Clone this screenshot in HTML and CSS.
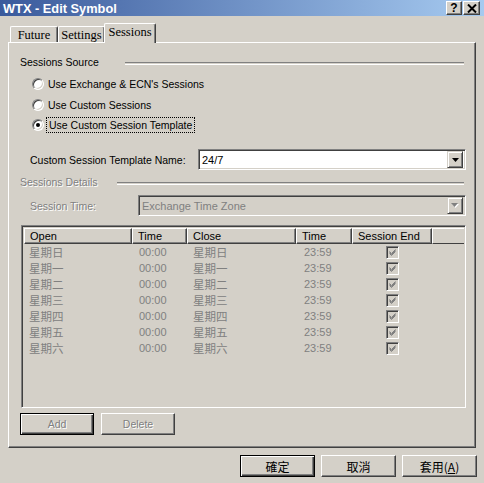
FILE: index.html
```html
<!DOCTYPE html>
<html>
<head>
<meta charset="utf-8">
<link rel="stylesheet" href="styles.css">
</head>
<body>
<div class="win">
  <div class="titlebar">
    <span class="title">WTX - Edit Symbol</span>
    <div class="tbtns">
      <span class="tbtn q">?</span>
      <span class="tbtn x"><svg width="10" height="9" viewBox="0 0 10 9"><path d="M1 0.5 L9 8.5 M9 0.5 L1 8.5" stroke="#000" stroke-width="2"/></svg></span>
    </div>
  </div>
  <div class="tabstrip">
    <span class="tab t1">Future</span>
    <span class="tab t2">Settings</span>
    <span class="tab sel">Sessions</span>
  </div>
  <div class="panel">
    <div class="grp">
      <span class="grp-label gl1">Sessions Source</span>
      <span class="grp-line"></span>
    </div>
    <div class="radios">
      <div class="radio-row r1"><span class="radio"></span><span>Use Exchange &amp; ECN's Sessions</span></div>
      <div class="radio-row r2"><span class="radio"></span><span>Use Custom Sessions</span></div>
      <div class="radio-row r3"><span class="radio on"><span class="dot"></span></span><span class="focus">Use Custom Session Template</span></div>
    </div>
    <div class="field f1">
      <span class="flabel">Custom Session Template Name:</span>
      <div class="combo c1">
        <span class="cval">24/7</span>
        <span class="cbtn"><svg width="7" height="4" viewBox="0 0 7 4"><path d="M0 0 H7 L3.5 4 Z" fill="#000"/></svg></span>
      </div>
    </div>
    <div class="grp g2">
      <span class="grp-label gl2 dis">Sessions Details</span>
      <span class="grp-line"></span>
    </div>
    <div class="field f2">
      <span class="flabel dis">Session Time:</span>
      <div class="combo c2 disabled">
        <span class="cval">Exchange Time Zone</span>
        <span class="cbtn"><svg width="8" height="5" viewBox="0 0 8 5"><path d="M1 1 H8 L4.5 5 Z" fill="#fff"/><path d="M0 0 H7 L3.5 4 Z" fill="#808080"/></svg></span>
      </div>
    </div>
    <div class="listview">
      <div class="lhead">
        <span class="hc w1">Open</span>
        <span class="hc w2">Time</span>
        <span class="hc w3">Close</span>
        <span class="hc w4">Time</span>
        <span class="hc w5">Session End</span>
        <span class="hc wrest"></span>
      </div>
      <div class="lrow"><span class="c w1">星期日</span><span class="c w2">00:00</span><span class="c w3">星期日</span><span class="c w4">23:59</span><span class="c w5 ck"><span class="chk"><svg width="9" height="9" viewBox="0 0 9 9"><path d="M1.5 3.5 L3.5 5.5 L7.5 1.5 M1.5 4.5 L3.5 6.5 L7.5 2.5 M1.5 5.5 L3.5 7.5 L7.5 3.5" stroke="#808080" stroke-width="1" fill="none"/></svg></span></span></div>
      <div class="lrow"><span class="c w1">星期一</span><span class="c w2">00:00</span><span class="c w3">星期一</span><span class="c w4">23:59</span><span class="c w5 ck"><span class="chk"><svg width="9" height="9" viewBox="0 0 9 9"><path d="M1.5 3.5 L3.5 5.5 L7.5 1.5 M1.5 4.5 L3.5 6.5 L7.5 2.5 M1.5 5.5 L3.5 7.5 L7.5 3.5" stroke="#808080" stroke-width="1" fill="none"/></svg></span></span></div>
      <div class="lrow"><span class="c w1">星期二</span><span class="c w2">00:00</span><span class="c w3">星期二</span><span class="c w4">23:59</span><span class="c w5 ck"><span class="chk"><svg width="9" height="9" viewBox="0 0 9 9"><path d="M1.5 3.5 L3.5 5.5 L7.5 1.5 M1.5 4.5 L3.5 6.5 L7.5 2.5 M1.5 5.5 L3.5 7.5 L7.5 3.5" stroke="#808080" stroke-width="1" fill="none"/></svg></span></span></div>
      <div class="lrow"><span class="c w1">星期三</span><span class="c w2">00:00</span><span class="c w3">星期三</span><span class="c w4">23:59</span><span class="c w5 ck"><span class="chk"><svg width="9" height="9" viewBox="0 0 9 9"><path d="M1.5 3.5 L3.5 5.5 L7.5 1.5 M1.5 4.5 L3.5 6.5 L7.5 2.5 M1.5 5.5 L3.5 7.5 L7.5 3.5" stroke="#808080" stroke-width="1" fill="none"/></svg></span></span></div>
      <div class="lrow"><span class="c w1">星期四</span><span class="c w2">00:00</span><span class="c w3">星期四</span><span class="c w4">23:59</span><span class="c w5 ck"><span class="chk"><svg width="9" height="9" viewBox="0 0 9 9"><path d="M1.5 3.5 L3.5 5.5 L7.5 1.5 M1.5 4.5 L3.5 6.5 L7.5 2.5 M1.5 5.5 L3.5 7.5 L7.5 3.5" stroke="#808080" stroke-width="1" fill="none"/></svg></span></span></div>
      <div class="lrow"><span class="c w1">星期五</span><span class="c w2">00:00</span><span class="c w3">星期五</span><span class="c w4">23:59</span><span class="c w5 ck"><span class="chk"><svg width="9" height="9" viewBox="0 0 9 9"><path d="M1.5 3.5 L3.5 5.5 L7.5 1.5 M1.5 4.5 L3.5 6.5 L7.5 2.5 M1.5 5.5 L3.5 7.5 L7.5 3.5" stroke="#808080" stroke-width="1" fill="none"/></svg></span></span></div>
      <div class="lrow"><span class="c w1">星期六</span><span class="c w2">00:00</span><span class="c w3">星期六</span><span class="c w4">23:59</span><span class="c w5 ck"><span class="chk"><svg width="9" height="9" viewBox="0 0 9 9"><path d="M1.5 3.5 L3.5 5.5 L7.5 1.5 M1.5 4.5 L3.5 6.5 L7.5 2.5 M1.5 5.5 L3.5 7.5 L7.5 3.5" stroke="#808080" stroke-width="1" fill="none"/></svg></span></span></div>
    </div>
    <div class="lbtns">
      <span class="btn def dbtn">Add</span>
      <span class="btn dbtn">Delete</span>
    </div>
  </div>
  <div class="bottom">
    <span class="btn def cjk">確定</span>
    <span class="btn cjk">取消</span>
    <span class="btn cjk">套用(<u>A</u>)</span>
  </div>
</div>
</body>
</html>
```

FILE: styles.css
```css
html, body {
  margin: 0;
  padding: 0;
}
body {
  background: #d4d0c8;
  width: 484px;
  height: 483px;
  overflow: hidden;
  font-family: "Liberation Sans", Arial, "Noto Sans CJK TC", sans-serif;
  font-size: 10.5px;
  color: #000;
}
.win {
  display: flex;
  flex-direction: column;
  width: 484px;
  height: 483px;
}
.titlebar {
  height: 16px;
  display: flex;
  align-items: center;
  justify-content: space-between;
  background: linear-gradient(to right, #3a5a9c, #a6caf0);
  padding-left: 3px;
  padding-right: 4px;
}
.title {
  color: #fff;
  font-weight: bold;
  font-size: 12.8px;
}
.tbtns {
  display: flex;
  gap: 1px;
}
.tbtn {
  width: 14px;
  height: 12px;
  background: #d4d0c8;
  border-top: 1px solid #fff;
  border-left: 1px solid #fff;
  border-right: 1px solid #404040;
  border-bottom: 1px solid #404040;
  box-shadow: inset -1px -1px 0 #808080;
  display: flex;
  align-items: center;
  justify-content: center;
  font-weight: bold;
  font-size: 12px;
  line-height: 12px;
}
.tbtn.x {
  width: 15px;
}
.tabstrip {
  margin-top: 6px;
  height: 20px;
  display: flex;
  align-items: flex-end;
  padding-left: 10px;
  position: relative;
  z-index: 1;
}
.tab {
  font-family: "Liberation Serif", "Times New Roman", serif;
  font-size: 12.5px;
  display: flex;
  align-items: center;
  justify-content: center;
  border-top: 1px solid #fff;
  border-left: 1px solid #fff;
  border-right: 1px solid #404040;
  box-shadow: inset -1px 0 0 #808080;
  border-top-left-radius: 2px;
  border-top-right-radius: 2px;
  box-sizing: border-box;
  height: 16px;
  padding-top: 1px;
}
.t1 { width: 48px; }
.t2 { width: 47px; }
.tab.sel {
  width: 52px;
  height: 20px;
  margin-left: -1px;
  margin-bottom: -1px;
  background: #d4d0c8;
  padding-top: 0;
  padding-bottom: 2px;
}
.panel {
  margin-left: 8px;
  width: 468px;
  height: 406px;
  box-sizing: border-box;
  border-top: 1px solid #fff;
  border-left: 1px solid #fff;
  border-right: 1px solid #404040;
  border-bottom: 1px solid #404040;
  box-shadow: inset -1px -1px 0 #808080;
  padding-left: 11px;
  padding-right: 11px;
  display: flex;
  flex-direction: column;
}
.grp {
  margin-top: 11px;
  height: 16px;
  display: flex;
  align-items: center;
}
.grp.g2 {
  margin-top: 4px;
}
.grp-label {
  flex: none;
}
.gl1 { width: 105px; }
.gl2 { width: 97px; }
.grp-line {
  flex: 1;
  height: 1px;
  border-top: 1px solid #808080;
  border-bottom: 1px solid #fff;
  margin-top: 2px;
}
.dis {
  color: #808080;
  text-shadow: 1px 1px 0 #fff;
}
.radios {
  margin-top: 4px;
  display: flex;
  flex-direction: column;
}
.radio-row {
  display: flex;
  align-items: center;
  padding-left: 12px;
  height: 20px;
}
.radio-row.r2 { height: 21px; }
.radio {
  width: 12px;
  height: 12px;
  box-sizing: border-box;
  border-radius: 50%;
  background: #fff;
  border: 1px solid;
  border-color: #808080 #fff #fff #808080;
  box-shadow: inset 1px 1px 0 #404040, inset -1px -1px 0 #d4d0c8;
  margin-right: 4px;
  display: flex;
  align-items: center;
  justify-content: center;
}
.dot {
  width: 4px;
  height: 4px;
  border-radius: 50%;
  background: #000;
}
.focus {
  outline: 1px dotted #000;
  outline-offset: 1px;
  padding: 0 1px;
}
.field {
  display: flex;
  align-items: center;
  height: 21px;
  margin-right: -2px;
}
.f1 { margin-top: 14px; }
.f2 { margin-top: 5px; }
.flabel {
  padding-left: 10px;
  flex: none;
}
.f1 .flabel { width: 168px; }
.f2 .flabel { width: 108px; }
.combo {
  flex: 1;
  height: 21px;
  box-sizing: border-box;
  background: #fff;
  border-top: 1px solid #808080;
  border-left: 1px solid #808080;
  border-right: 1px solid #fff;
  border-bottom: 1px solid #fff;
  box-shadow: inset 1px 1px 0 #404040, inset -1px -1px 0 #d4d0c8;
  display: flex;
  align-items: center;
  padding: 2px;
}
.combo.disabled {
  background: #d4d0c8;
}
.cval {
  flex: 1;
  padding-left: 1px;
  font-size: 11px;
}
.disabled .cval {
  color: #808080;
}
.cbtn {
  width: 16px;
  height: 17px;
  box-sizing: border-box;
  background: #d4d0c8;
  border-top: 1px solid #d4d0c8;
  border-left: 1px solid #d4d0c8;
  border-right: 1px solid #404040;
  border-bottom: 1px solid #404040;
  box-shadow: inset 1px 1px 0 #fff, inset -1px -1px 0 #808080;
  display: flex;
  align-items: center;
  justify-content: center;
}
.listview {
  margin-top: 9px;
  margin-left: 1px;
  width: 445px;
  height: 183px;
  box-sizing: border-box;
  border-top: 1px solid #808080;
  border-left: 1px solid #808080;
  border-right: 1px solid #fff;
  border-bottom: 1px solid #fff;
  box-shadow: inset 1px 1px 0 #404040, inset -1px -1px 0 #d4d0c8;
  padding: 2px 1px 1px 2px;
  display: flex;
  flex-direction: column;
}
.lhead {
  display: flex;
  height: 16px;
}
.hc {
  box-sizing: border-box;
  height: 16px;
  border-top: 1px solid #fff;
  border-left: 1px solid #fff;
  border-right: 1px solid #404040;
  border-bottom: 1px solid #404040;
  box-shadow: inset -1px -1px 0 #808080;
  padding-left: 5px;
  display: flex;
  align-items: center;
  font-size: 11px;
}
.w1 { width: 108px; flex: none; }
.w2 { width: 55px; flex: none; }
.w3 { width: 109px; flex: none; }
.w4 { width: 56px; flex: none; }
.w5 { width: 80px; flex: none; }
.wrest { flex: 1; border-right: none; box-shadow: none; }
.lrow {
  display: flex;
  height: 16px;
  align-items: center;
  color: #808080;
}
.c {
  box-sizing: border-box;
  padding-left: 6px;
  font-size: 11px;
}
.c.w1 { padding-left: 5px; }
.c.w2 { padding-left: 7px; }
.c.w4 { padding-left: 8px; }
.c.w1, .c.w3 {
  font-family: "Noto Sans CJK TC", sans-serif;
  font-size: 11.5px;
}
.ck {
  display: flex;
  justify-content: center;
  padding-left: 0;
}
.chk {
  width: 13px;
  height: 13px;
  box-sizing: border-box;
  background: #d4d0c8;
  border-top: 1px solid #808080;
  border-left: 1px solid #808080;
  border-right: 1px solid #fff;
  border-bottom: 1px solid #fff;
  box-shadow: inset 1px 1px 0 #404040, inset -1px -1px 0 #d4d0c8;
  display: flex;
  align-items: center;
  justify-content: center;
}
.lbtns {
  margin-top: 5px;
  display: flex;
  gap: 7px;
}
.btn {
  width: 75px;
  height: 22px;
  box-sizing: border-box;
  background: #d4d0c8;
  border-top: 1px solid #fff;
  border-left: 1px solid #fff;
  border-right: 1px solid #404040;
  border-bottom: 1px solid #404040;
  box-shadow: inset -1px -1px 0 #808080;
  display: flex;
  align-items: center;
  justify-content: center;
  flex: none;
}
.btn.def {
  border: 1px solid #000;
  box-shadow: inset 1px 1px 0 #fff, inset -1px -1px 0 #404040, inset -2px -2px 0 #808080;
}
.lbtns .btn { width: 74px; }
.dbtn {
  color: #808080;
  text-shadow: 1px 1px 0 #fff;
}
.bottom {
  margin-top: 7px;
  display: flex;
  justify-content: flex-end;
  gap: 6px;
  padding-right: 7px;
}
.cjk {
  font-family: "Noto Sans CJK TC", sans-serif;
  font-size: 12px;
}
.cjk u {
  text-decoration: underline;
}
```
